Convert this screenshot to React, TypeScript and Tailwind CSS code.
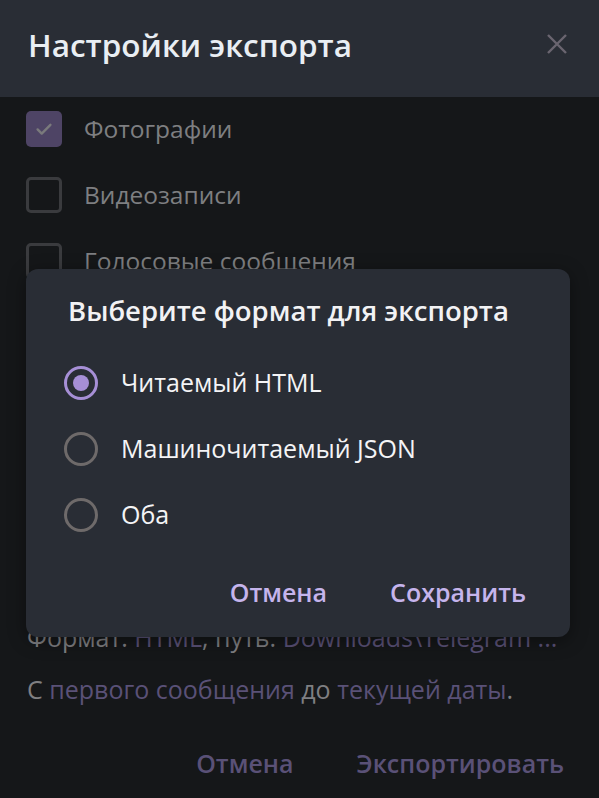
import React from "react";

const font = { fontFamily: '"Open Sans", "Noto Sans", sans-serif' };

function Checkbox({ checked, label }: { checked?: boolean; label: string }) {
  return (
    <div className="flex items-center h-[66px]">
      {checked ? (
        <div className="w-[36px] h-[36px] rounded-[5px] bg-[#4e4465] flex items-center justify-center">
          <svg width="22" height="22" viewBox="0 0 24 24" fill="none">
            <path d="M5 12.5l4.5 4.5L19 7.5" stroke="#7a7a7c" strokeWidth="2.6" strokeLinecap="round" strokeLinejoin="round" />
          </svg>
        </div>
      ) : (
        <div className="w-[36px] h-[36px] rounded-[5px] border-[3px] border-[#3a3b3e]" />
      )}
      <span className="ml-[22px] text-[24.5px] leading-none text-[#7e7f81]">{label}</span>
    </div>
  );
}

function Radio({ checked, label }: { checked?: boolean; label: string }) {
  return (
    <div className="flex items-center h-[66px]">
      <div
        className={
          checked
            ? "w-[34px] h-[34px] rounded-full border-[3px] border-[#a68fd6] flex items-center justify-center"
            : "w-[34px] h-[34px] rounded-full border-[3px] border-[#6e6a6a]"
        }
      >
        {checked && <div className="w-[16px] h-[16px] rounded-full bg-[#a68fd6]" />}
      </div>
      <span className="ml-[23px] text-[25px] leading-none text-[#f4f4f6]">{label}</span>
    </div>
  );
}

export default function App() {
  return (
    <div style={font} className="relative w-[599px] h-[798px] bg-[#151719] overflow-hidden flex flex-col">
      {/* header */}
      <div className="h-[97px] bg-[#292d35] flex items-center justify-between pl-[28px] pr-[30px] shrink-0">
        <h1 className="text-[31.5px] leading-none font-semibold text-[#e9eef3] mt-[-8px]">Настройки экспорта</h1>
        <svg width="24" height="24" viewBox="0 0 24 24" className="mt-[-10px]">
          <path d="M3 3L21 21M21 3L3 21" stroke="#6a6570" strokeWidth="2.4" />
        </svg>
      </div>

      {/* options */}
      <div className="pl-[26px] mt-[-1px]">
        <Checkbox checked label="Фотографии" />
        <Checkbox label="Видеозаписи" />
        <Checkbox label="Голосовые сообщения" />
      </div>

      <div className="mt-auto pl-[27px] pr-[28px]">
        <p className="mb-[7px] text-[25px] leading-[45px] text-[#7f7f82] whitespace-nowrap">
          Формат: <span className="text-[#5a5177]">HTML</span>, путь:{" "}
          <span className="text-[#5a5177]">Downloads\Telegram ...</span>
        </p>
        <p className="text-[25px] leading-[45px] text-[#7f7f82] whitespace-nowrap">
          С <span className="text-[#5a5177]">первого сообщения</span> до{" "}
          <span className="text-[#5a5177]">текущей даты</span>.
        </p>
        <div className="flex justify-end gap-[63px] pr-[7px] pt-[39px] pb-[22px]">
          <span className="text-[25px] leading-none font-semibold text-[#5a5177]">Отмена</span>
          <span className="text-[25px] leading-none font-semibold text-[#5a5177]">Экспортировать</span>
        </div>
      </div>

      {/* overlay dialog */}
      <div className="absolute left-[26px] top-[269px] w-[544px] h-[368px] rounded-[12px] bg-[#292d35] shadow-[0_4px_18px_rgba(0,0,0,0.4)] flex flex-col">
        <h2 className="pl-[42px] pt-[28px] text-[27.5px] leading-none font-semibold text-[#f2f2f4]">Выберите формат для экспорта</h2>
        <div className="pl-[38px] pt-[25px]">
          <Radio checked label="Читаемый HTML" />
          <Radio label="Машиночитаемый JSON" />
          <Radio label="Оба" />
        </div>
        <div className="mt-auto flex justify-end gap-[63px] pr-[44px] pb-[32px]">
          <span className="text-[25px] leading-none font-semibold text-[#c5b4ec]">Отмена</span>
          <span className="text-[25px] leading-none font-semibold text-[#c5b4ec]">Сохранить</span>
        </div>
      </div>
    </div>
  );
}
